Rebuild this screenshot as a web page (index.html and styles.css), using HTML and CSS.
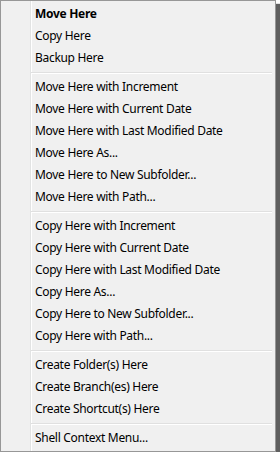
FILE: index.html
```html
<!DOCTYPE html>
<html>
<head>
<meta charset="utf-8">
<link rel="stylesheet" href="styles.css">
</head>
<body>
<div class="menu">
  <div class="item default">Move Here</div>
  <div class="item">Copy Here</div>
  <div class="item">Backup Here</div>
  <div class="sep"></div>
  <div class="item">Move Here with Increment</div>
  <div class="item">Move Here with Current Date</div>
  <div class="item">Move Here with Last Modified Date</div>
  <div class="item">Move Here As...</div>
  <div class="item">Move Here to New Subfolder...</div>
  <div class="item">Move Here with Path...</div>
  <div class="sep"></div>
  <div class="item">Copy Here with Increment</div>
  <div class="item">Copy Here with Current Date</div>
  <div class="item">Copy Here with Last Modified Date</div>
  <div class="item">Copy Here As...</div>
  <div class="item">Copy Here to New Subfolder...</div>
  <div class="item">Copy Here with Path...</div>
  <div class="sep"></div>
  <div class="item">Create Folder(s) Here</div>
  <div class="item">Create Branch(es) Here</div>
  <div class="item">Create Shortcut(s) Here</div>
  <div class="sep"></div>
  <div class="item">Shell Context Menu...</div>
</div>
</body>
</html>
```
FILE: styles.css
```css
html, body {
  margin: 0;
  padding: 0;
  background: #ffffff;
}
.menu {
  width: 276px;
  height: 452px;
  box-sizing: border-box;
  border: 1px solid #979797;
  padding: 2px;
  background-color: #f0f0f0;
  background-image: linear-gradient(to right, transparent 29px, #e2e3e3 29px, #e2e3e3 30px, #ffffff 30px, #ffffff 31px, transparent 31px);
  box-shadow: 4px 4px 1px rgba(55, 55, 55, 0.8);
  font-family: "Noto Sans", "Open Sans", sans-serif;
  font-size: 12px;
  letter-spacing: -0.3px;
  color: #000;
}
.item {
  height: 22px;
  line-height: 22px;
  padding-left: 32px;
  white-space: nowrap;
}
.default {
  font-weight: bold;
}
.sep {
  height: 7px;
  margin-left: 28px;
  margin-right: 1px;
  background: linear-gradient(to bottom, transparent 3px, #e0e0e0 3px, #e0e0e0 4px, #ffffff 4px, #ffffff 5px, transparent 5px);
}
```
